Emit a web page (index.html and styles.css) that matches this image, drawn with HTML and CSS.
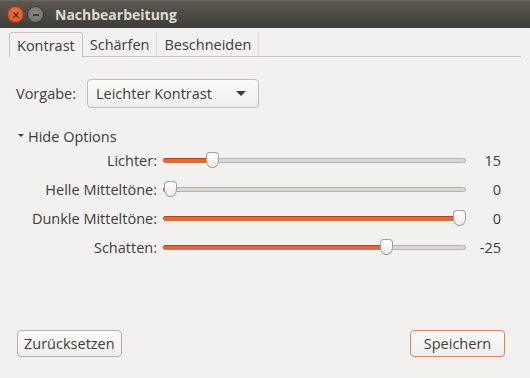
FILE: index.html
```html
<!DOCTYPE html>
<html lang="de">
<head>
  <meta charset="UTF-8">
  <title>Nachbearbeitung</title>
  <link rel="stylesheet" href="styles.css">
</head>
<body>
  <div class="window">
    <!-- Titelleiste -->
    <div class="titlebar">
      <span class="win-btn close">
        <svg width="8" height="8" viewBox="0 0 8 8"><path d="M1.5 1.5 L6.5 6.5 M6.5 1.5 L1.5 6.5" stroke="#3a2a22" stroke-width="1.4"/></svg>
      </span>
      <span class="win-btn minimize">
        <svg width="8" height="8" viewBox="0 0 8 8"><path d="M1 4 H7" stroke="#2f2e2b" stroke-width="1.6"/></svg>
      </span>
      <span class="title">Nachbearbeitung</span>
    </div>

    <!-- Reiter -->
    <div class="tabs">
      <div class="tab active">Kontrast</div>
      <div class="tab">Schärfen</div>
      <div class="tab">Beschneiden</div>
      <div class="tab-fill"></div>
    </div>

    <div class="content">
      <div class="preset">
        <span class="label">Vorgabe:</span>
        <div class="combo">
          <span>Leichter Kontrast</span>
          <span class="combo-arrow"></span>
        </div>
      </div>

      <div class="expander"><span class="exp-arrow"></span>Hide Options</div>

      <div class="sliders">
        <span class="s-label">Lichter:</span>
        <div class="track" style="--p: 0.148"><div class="fill"></div><span class="knob"></span></div>
        <span class="s-value">15</span>

        <span class="s-label">Helle Mitteltöne:</span>
        <div class="track" style="--p: 0.003"><div class="fill"></div><span class="knob"></span></div>
        <span class="s-value">0</span>

        <span class="s-label">Dunkle Mitteltöne:</span>
        <div class="track" style="--p: 1"><div class="fill"></div><span class="knob"></span></div>
        <span class="s-value">0</span>

        <span class="s-label">Schatten:</span>
        <div class="track" style="--p: 0.748"><div class="fill"></div><span class="knob"></span></div>
        <span class="s-value">-25</span>
      </div>
    </div>

    <div class="footer">
      <button class="btn">Zurücksetzen</button>
      <button class="btn primary">Speichern</button>
    </div>
  </div>
</body>
</html>
```

FILE: styles.css
```css
* {
  margin: 0;
  padding: 0;
  box-sizing: border-box;
}

body {
  font-family: "Open Sans", "Noto Sans", sans-serif;
  font-size: 14.5px;
  color: #3c3c3c;
  background-color: #3c3b37;
}

.window {
  width: 530px;
  height: 378px;
  display: flex;
  flex-direction: column;
  background-color: #f2f1f0;
  overflow: hidden;
}

/* Titelleiste */
.titlebar {
  height: 28px;
  flex: none;
  display: flex;
  align-items: center;
  padding-left: 7px;
  background: linear-gradient(to bottom, #5c5850, #3e3c38);
  border-top: 1px solid #6a665d;
}

.win-btn {
  width: 17px;
  height: 17px;
  border-radius: 50%;
  display: flex;
  align-items: center;
  justify-content: center;
  margin-right: 3px;
}

.win-btn.close {
  background: radial-gradient(circle at 50% 40%, #f3763f, #de4d1f);
  border: 1px solid #8f3c1f;
}

.win-btn.minimize {
  background: radial-gradient(circle at 50% 40%, #8c8a84, #6a6863);
  border: 1px solid #3a3935;
}

.title {
  margin-left: 8px;
  font-weight: bold;
  font-size: 14px;
  color: #dfdbd2;
}

/* Reiter */
.tabs {
  display: flex;
  height: 25px;
  margin-top: 4px;
  padding-left: 9px;
  padding-right: 9px;
  flex: none;
}

.tab {
  padding: 0 7px;
  display: flex;
  align-items: center;
  border-bottom: 1px solid #c7c4bf;
  border-right: 1px solid #dedbd6;
  color: #3c3c3c;
}

.tab.active {
  border: 1px solid #c7c4bf;
  border-bottom: none;
  border-radius: 3px 3px 0 0;
}

.tab-fill {
  flex: 1;
  border-bottom: 1px solid #c7c4bf;
}

/* Inhalt */
.content {
  flex: 1;
  padding: 22px 16px 0 16px;
}

.preset {
  display: flex;
  align-items: center;
}

.label {
  width: 71px;
}

.combo {
  width: 172px;
  height: 29px;
  border: 1px solid #c0bdb8;
  border-radius: 4px;
  background: linear-gradient(to bottom, #fbfbfa, #efeeec);
  display: flex;
  align-items: center;
  justify-content: space-between;
  padding: 0 12px 0 8px;
}

.combo-arrow {
  width: 0;
  height: 0;
  border-left: 5px solid transparent;
  border-right: 5px solid transparent;
  border-top: 5px solid #3c3c3c;
}

.expander {
  margin-top: 19px;
  display: flex;
  align-items: center;
  padding-left: 2px;
}

.exp-arrow {
  width: 0;
  height: 0;
  border-left: 3px solid transparent;
  border-right: 3px solid transparent;
  border-top: 3px solid #3c3c3c;
  margin-right: 4px;
  margin-top: -3px;
}

/* Schieberegler */
.sliders {
  margin-top: 0;
  display: grid;
  grid-template-columns: 141px 303px 29px;
  grid-auto-rows: 29px;
  column-gap: 6px;
  align-items: center;
}

.s-label {
  text-align: right;
}

.s-value {
  text-align: right;
}

.track {
  position: relative;
  height: 5px;
  border: 1px solid #b5b2ad;
  border-radius: 3px;
  background-color: #dad8d4;
}

.fill {
  width: calc(var(--p) * (100% - 11px) + 6px);
  margin: -1px 0 0 -1px;
  height: 5px;
  border-radius: 3px;
  background-color: #df6a3c;
  border-top: 1px solid #b2431b;
}

.knob {
  position: absolute;
  top: -7px;
  left: calc(var(--p) * (100% - 11px) - 1px);
  width: 13px;
  height: 16px;
  background: linear-gradient(to bottom, #ffffff, #ecebe9);
  border: 1px solid #a3a09b;
  border-radius: 4px 4px 6px 6px / 4px 4px 8px 8px;
}

/* Knöpfe unten */
.footer {
  flex: none;
  display: flex;
  justify-content: space-between;
  padding: 0 25px 21px 17px;
}

.btn {
  font-family: inherit;
  font-size: 14.5px;
  color: #3c3c3c;
  height: 27px;
  padding: 0 6px;
  border: 1px solid #b1aea9;
  border-radius: 4px;
  background: linear-gradient(to bottom, #fbfbfa, #efeeec);
}

.btn.primary {
  width: 95px;
  border-color: #e0845f;
}
```
